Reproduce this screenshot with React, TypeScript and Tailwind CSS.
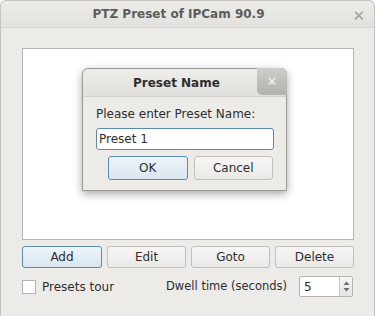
import React from "react";

const font = { fontFamily: '"DejaVu Sans", sans-serif' };

function Btn({ label, active, className = "" }: { label: string; active?: boolean; className?: string }) {
  return (
    <div
      className={`flex items-center justify-center rounded-[3px] border text-[12px] text-[#2e2e2e] ${
        active
          ? "border-[#5a8bb0] bg-gradient-to-b from-[#eef4f9] to-[#d9e6f0]"
          : "border-[#c2c0bb] bg-gradient-to-b from-[#f7f6f5] to-[#ebe9e6]"
      } ${className}`}
    >
      {label}
    </div>
  );
}

export default function App() {
  return (
    <div className="relative h-[316px] w-[375px] overflow-hidden bg-white" style={font}>
      <div className="flex h-[316px] w-[375px] flex-col rounded-t-[6px] border border-b-0 border-[#c4c2bd] bg-[#edebe8]">
        {/* title bar */}
        <div className="relative flex h-[27px] shrink-0 items-center justify-center rounded-t-[6px] border-b border-[#d8d6d1] bg-gradient-to-b from-[#eeece9] to-[#e3e1dd] pr-[18px]">
          <span className="text-[12px] font-bold text-[#5c5c5c]">PTZ Preset of IPCam 90.9</span>
          <span className="absolute right-[9px] top-[4px] text-[15px] text-[#a0a0a0]">✕</span>
        </div>
        {/* body */}
        <div className="flex flex-col pl-[21px] pr-[20px] pt-[20px]">
          <div className="h-[192px] w-[332px] border border-[#b8b6b2] bg-white" />
          <div className="mt-[6px] flex gap-[5px]">
            <Btn label="Add" active className="h-[22px] w-[80px]" />
            <Btn label="Edit" className="h-[22px] w-[79px]" />
            <Btn label="Goto" className="h-[22px] w-[79px]" />
            <Btn label="Delete" className="h-[22px] w-[79px]" />
          </div>
          <div className="mt-[8px] flex h-[21px] items-center">
            <div className="h-[14px] w-[14px] border border-[#b5b3ae] bg-white" />
            <span className="ml-[6px] text-[12px] text-[#2e2e2e]">Presets tour</span>
            <span className="ml-auto mr-[12px] text-[11.5px] text-[#2e2e2e]">Dwell time (seconds)</span>
            <div className="mr-[1px] flex h-[21px] w-[54px] rounded-[2px] border border-[#b5b3ae] bg-white">
              <span className="flex flex-1 items-center pl-[4px] text-[12px] text-[#2e2e2e]">5</span>
              <div className="flex w-[13px] flex-col items-center justify-center border-l border-[#c8c6c1] bg-gradient-to-b from-[#f7f6f5] to-[#e6e4e0]">
                <svg width="7" height="13" viewBox="0 0 7 13">
                  <path d="M0.5 5 L3.5 1.5 L6.5 5 Z" fill="#6a6a6a" />
                  <path d="M0.5 8 L3.5 11.5 L6.5 8 Z" fill="#6a6a6a" />
                </svg>
              </div>
            </div>
          </div>
        </div>
      </div>

      {/* dialog */}
      <div
        className="absolute left-[82px] top-[68px] flex h-[123px] w-[205px] flex-col rounded-t-[6px] border border-[#9c9a96] bg-[#edebe8]"
        style={{ boxShadow: "0 3px 8px rgba(0,0,0,0.35)" }}
      >
        <div className="relative flex h-[28px] shrink-0 items-center rounded-t-[6px] border-b border-[#d4d2cd] bg-gradient-to-b from-[#efedea] to-[#e2e0dc]">
          <span className="ml-[50px] text-[12px] font-bold text-[#2e2e2e]">Preset Name</span>
          <div className="absolute right-[-1px] top-[-1px] flex h-[27px] w-[30px] items-center justify-center rounded-bl-[5px] rounded-tr-[6px] bg-gradient-to-b from-[#cfcdc9] to-[#b3b1ac]">
            <span className="text-[13px] font-bold text-[#f4f4f4]">✕</span>
          </div>
        </div>
        <div className="flex flex-col px-[13px] pt-[8px]">
          <span className="text-[12px] text-[#2e2e2e]">Please enter Preset Name:</span>
          <div className="mt-[5px] flex h-[22px] w-[178px] items-center rounded-[3px] border border-[#5a8bb0] bg-white pl-[2px] text-[12px] text-[#2e2e2e]">
            Preset 1
          </div>
          <div className="mt-[6px] flex gap-[6px] pl-[12px]">
            <Btn label="OK" active className="h-[24px] w-[80px]" />
            <Btn label="Cancel" className="h-[24px] w-[80px]" />
          </div>
        </div>
      </div>
    </div>
  );
}
